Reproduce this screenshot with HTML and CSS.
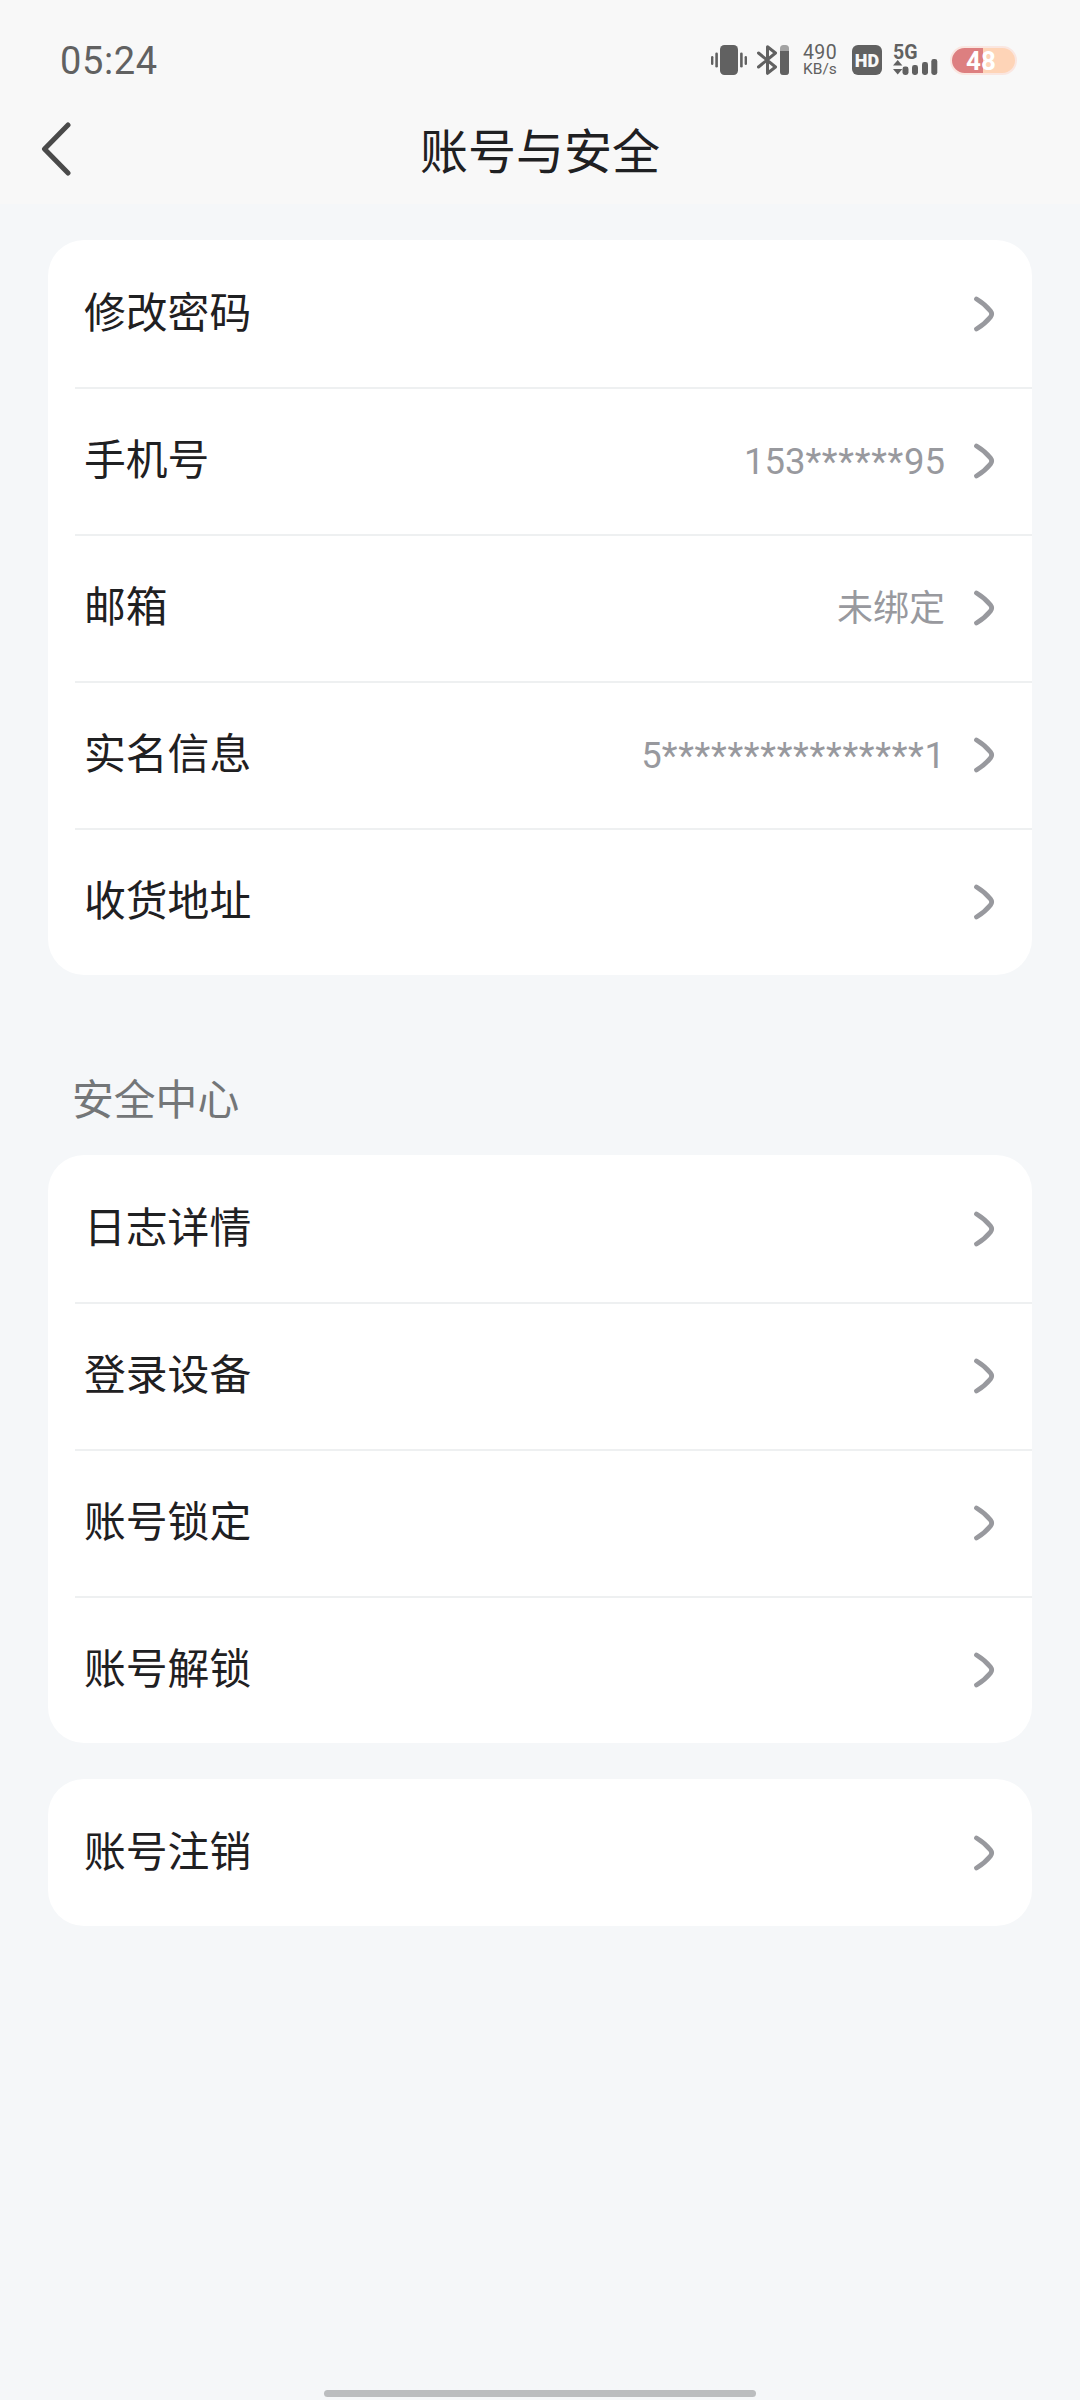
FILE: index.html
```
<!DOCTYPE html>
<html lang="zh-CN">
<head>
    <meta charset="UTF-8">
    <meta name="viewport" content="width=device-width, initial-scale=1.0">
    <title>账号与安全</title>
    <link rel="stylesheet" href="styles.css">
</head>
<body>
    <svg class="sprite">
        <symbol id="chevron" viewBox="0 0 22 36">
            <path d="M2.5 3 C7.5 6 12.5 10 16.5 15 Q18.8 18 16.5 21 C12.5 26 7.5 30 2.5 33" fill="none" stroke="#98999e" stroke-width="4.8" stroke-linecap="round" stroke-linejoin="round"/>
        </symbol>
    </svg>

    <header class="header">
        <div class="status-bar">
            <span class="time">05:24</span>
            <div class="status-icons">
                <!-- vibrate -->
                <svg class="icon-vibrate" width="36" height="30" viewBox="0 0 36 30" fill="#616161">
                    <rect x="9" y="0" width="18" height="30" rx="4.5"/>
                    <rect x="0" y="11" width="2.4" height="9" rx="1.2"/>
                    <rect x="4.3" y="7.5" width="2.6" height="15" rx="1.3"/>
                    <rect x="29.1" y="7.5" width="2.6" height="15" rx="1.3"/>
                    <rect x="33.6" y="11" width="2.4" height="9" rx="1.2"/>
                </svg>
                <!-- bluetooth with device battery -->
                <svg class="icon-bluetooth" width="33" height="30" viewBox="0 0 33 30">
                    <path d="M1.5 8 L18.5 22 L10.5 28.3 V1.7 L18.5 8 L1.5 22" fill="none" stroke="#616161" stroke-width="3" stroke-linecap="round" stroke-linejoin="round"/>
                    <rect x="23" y="0" width="9" height="30" rx="3.5" fill="#a3a3a3"/>
                    <path d="M23 6 H32 V26.5 Q32 30 28.5 30 H26.5 Q23 30 23 26.5 Z" fill="#616161"/>
                </svg>
                <div class="net-speed">
                    <span class="speed-value">490</span>
                    <span class="speed-unit">KB/s</span>
                </div>
                <span class="hd">HD</span>
                <!-- signal -->
                <div class="signal">
                    <span class="signal-type">5G</span>
                    <svg width="45" height="30" viewBox="0 0 45 30" fill="#616161">
                        <path d="M4.7 15 L9.4 20.5 H0 Z"/>
                        <path d="M0 24 H9.4 L4.7 29.5 Z"/>
                        <rect x="9.5" y="21.5" width="6" height="8.5" rx="2.4"/>
                        <rect x="19" y="20" width="6" height="10" rx="2.4"/>
                        <rect x="29" y="17" width="6" height="13" rx="2.4"/>
                        <rect x="38.3" y="14" width="6" height="16" rx="2.4"/>
                    </svg>
                </div>
                <div class="battery">48</div>
            </div>
        </div>
        <div class="nav-bar">
            <svg class="back" width="30" height="54" viewBox="0 0 30 54">
                <path d="M27 3 L3.5 27 L27 51" fill="none" stroke="#4a4a4a" stroke-width="5" stroke-linecap="round" stroke-linejoin="round"/>
            </svg>
            <h1>账号与安全</h1>
        </div>
    </header>

    <main class="content">
        <div class="card">
            <div class="row"><span class="label">修改密码</span><svg class="arrow"><use href="#chevron"/></svg></div>
            <div class="row"><span class="label">手机号</span><span class="value">153<span class="mask">******</span>95</span><svg class="arrow"><use href="#chevron"/></svg></div>
            <div class="row"><span class="label">邮箱</span><span class="value value-cn">未绑定</span><svg class="arrow"><use href="#chevron"/></svg></div>
            <div class="row"><span class="label">实名信息</span><span class="value">5<span class="mask">****************</span>1</span><svg class="arrow"><use href="#chevron"/></svg></div>
            <div class="row"><span class="label">收货地址</span><svg class="arrow"><use href="#chevron"/></svg></div>
        </div>

        <h2>安全中心</h2>
        <div class="card">
            <div class="row"><span class="label">日志详情</span><svg class="arrow"><use href="#chevron"/></svg></div>
            <div class="row"><span class="label">登录设备</span><svg class="arrow"><use href="#chevron"/></svg></div>
            <div class="row"><span class="label">账号锁定</span><svg class="arrow"><use href="#chevron"/></svg></div>
            <div class="row"><span class="label">账号解锁</span><svg class="arrow"><use href="#chevron"/></svg></div>
        </div>

        <div class="card card-last">
            <div class="row"><span class="label">账号注销</span><svg class="arrow"><use href="#chevron"/></svg></div>
        </div>
    </main>

    <div class="home-bar"></div>
</body>
</html>
```
FILE: styles.css
```
* {
    box-sizing: border-box;
}

body {
    display: flex;
    flex-direction: column;
    height: 2400px;
    margin: 0;
    background-color: #f5f7f9;
    color: #1f2022;
    font-family: Roboto, "Noto Sans CJK SC", sans-serif;
}

h1, h2 {
    margin: 0;
    font-weight: 400;
}

.sprite {
    display: none;
}

.header {
    height: 204px;
    background-color: #f8f8f8;
}

.status-bar {
    display: flex;
    justify-content: space-between;
    align-items: center;
    height: 120px;
    padding: 0 63px 0 60px;
    color: #616161;
}

.time {
    padding-top: 1px;
    font-size: 38px;
    line-height: 40px;
    letter-spacing: 0.6px;
}

.status-icons {
    display: flex;
    align-items: center;
    height: 30px;
}

.icon-bluetooth {
    margin-left: 10px;
}

.net-speed {
    display: flex;
    flex-direction: column;
    width: 36px;
    margin-left: 13px;
    padding-top: 1px;
    white-space: nowrap;
}

.speed-value {
    font-size: 19.5px;
    line-height: 17px;
    letter-spacing: 0.4px;
}

.speed-unit {
    font-size: 15.5px;
    line-height: 17px;
}

.hd {
    width: 30px;
    height: 30px;
    margin-left: 13px;
    border-radius: 6px;
    background-color: #616161;
    color: #f8f8f8;
    font-size: 18px;
    font-weight: 900;
    line-height: 31px;
    text-align: center;
}

.signal {
    position: relative;
    width: 45px;
    height: 30px;
    margin-left: 11px;
}

.signal-type {
    position: absolute;
    top: -1px;
    left: 0;
    font-size: 19.5px;
    font-weight: 700;
    line-height: 18px;
}

.battery {
    width: 67px;
    height: 29px;
    margin-left: 12px;
    padding-right: 5px;
    border: 2px solid #fae6e0;
    border-radius: 15px;
    background: linear-gradient(to right, #dd7f80 31px, #fed4b7 31px);
    color: #fff;
    font-size: 26px;
    font-weight: 700;
    line-height: 26px;
    text-align: center;
}

.nav-bar {
    display: grid;
    grid-template-columns: 30px 1fr 30px;
    align-items: center;
    height: 58px;
    padding: 0 41px;
}

h1 {
    padding-top: 8px;
    font-size: 48px;
    line-height: 50px;
    text-align: center;
}

.content {
    flex: 1;
    padding: 36px 48px 0;
}

.card {
    border-radius: 36px;
    background-color: #fff;
}

.row {
    display: flex;
    align-items: center;
    height: 147px;
    margin-left: 27px;
    padding: 0 36px 0 9px;
}

.row + .row {
    padding-bottom: 2px;
    border-top: 2px solid #eef0f1;
}

.label {
    flex: 1;
    font-size: 41.8px;
    line-height: 60px;
}

.value {
    padding-top: 2px;
    color: #98999e;
    font-size: 36.5px;
    line-height: 50px;
}

.mask {
    letter-spacing: 0.7px;
}

.value-cn {
    font-size: 36px;
}

.arrow {
    width: 22px;
    height: 36px;
    margin-left: 29px;
}

h2 {
    padding: 96px 0 24px 24px;
    color: #737678;
    font-size: 41.8px;
    line-height: 60px;
}

.card-last {
    margin-top: 36px;
}

.home-bar {
    width: 432px;
    height: 7px;
    margin: 0 auto 3px;
    border-radius: 4px;
    background-color: #bbbdbf;
}
```
